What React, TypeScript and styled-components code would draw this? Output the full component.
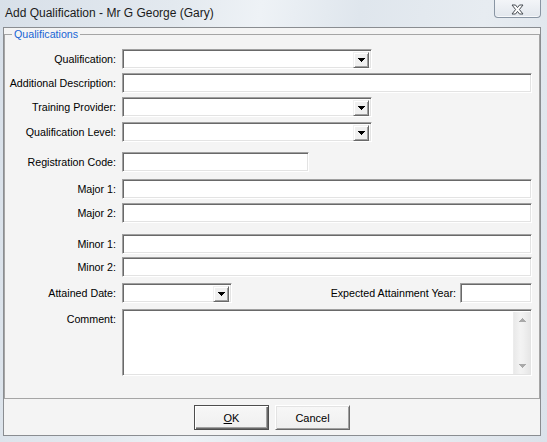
import React from 'react';
import styled, { createGlobalStyle } from 'styled-components';

const Global = createGlobalStyle`
  html, body { margin: 0; padding: 0; }
  body {
    background: #dde4eb;
    font-family: "Liberation Sans", Arial, sans-serif;
  }
`;

const Window = styled.div`
  width: 547px;
  height: 442px;
  display: flex;
  flex-direction: column;
  overflow: hidden;
  background: linear-gradient(100deg, #d8e0e9 0%, #e3e9ef 28%, #eef2f6 42%, #dfe6ed 58%, #e7ecf1 78%, #dbe2ea 100%);
`;

const TitleBar = styled.div`
  height: 27px;
  flex: none;
  display: flex;
  align-items: flex-start;
`;

const Title = styled.div`
  padding: 6px 0 0 5px;
  font-size: 12px;
  line-height: 14px;
  color: #1b1b1b;
  white-space: nowrap;
`;

const CloseButton = styled.div`
  box-sizing: border-box;
  margin-left: auto;
  margin-right: 6px;
  width: 47px;
  height: 18px;
  border: 1px solid #8995a3;
  border-top: none;
  border-radius: 0 0 4px 4px;
  background: linear-gradient(#f3f5f8, #e2e7ed);
  box-shadow: inset 0 -1px 0 #f7f9fb;
  display: flex;
  align-items: center;
  justify-content: center;
  padding-top: 1px;
`;

const Client = styled.div`
  flex: 1;
  margin: 0 6px 6px 3px;
  border: 1px solid #8a8d91;
  background: #f4f4f4;
  display: flex;
  flex-direction: column;
  min-height: 0;
`;

const GroupBox = styled.fieldset`
  box-sizing: border-box;
  flex: none;
  height: 371px;
  margin: 0;
  padding: 0;
  min-width: 0;
  border: 1px solid #a5a5a5;
`;

const Legend = styled.legend`
  margin-left: 7px;
  padding: 0 2px;
  font-size: 10.7px;
  line-height: 13px;
  color: #1765d4;
`;

const Row = styled.div<{ $mt: number; $top?: boolean }>`
  display: grid;
  grid-template-columns: 111px 410px;
  column-gap: 6px;
  align-items: ${p => (p.$top ? 'start' : 'center')};
  margin-top: ${p => p.$mt}px;
`;

const Label = styled.div<{ $pt?: number }>`
  text-align: right;
  font-size: 10.7px;
  line-height: 13px;
  color: #000;
  white-space: nowrap;
  padding-top: ${p => p.$pt ?? 0}px;
`;

const sunken = `
  box-sizing: border-box;
  background: #fff;
  border: 1px solid;
  border-color: #a0a0a0 #ffffff #ffffff #a0a0a0;
  box-shadow: inset 1px 1px 0 #696969, inset -1px -1px 0 #e3e3e3;
`;

const TextBox = styled.input<{ $w: number }>`
  ${sunken}
  width: ${p => p.$w}px;
  height: 20px;
  margin: 0;
  padding: 0 3px;
  font-family: "Liberation Sans", Arial, sans-serif;
  font-size: 11px;
  outline: none;
`;

const ComboBox = styled.div<{ $w: number }>`
  ${sunken}
  width: ${p => p.$w}px;
  height: 20px;
  padding: 2px;
  display: flex;
  justify-content: flex-end;
`;

const DropButton = styled.div`
  box-sizing: border-box;
  width: 16px;
  height: 16px;
  background: #f0f0f0;
  border: 1px solid;
  border-color: #f0f0f0 #696969 #696969 #f0f0f0;
  box-shadow: inset 1px 1px 0 #ffffff, inset -1px -1px 0 #a0a0a0;
  display: flex;
  align-items: center;
  justify-content: center;
`;

const SplitField = styled.div`
  display: flex;
  align-items: center;
`;

const InlineLabel = styled(Label)`
  margin-left: auto;
  margin-right: 4px;
`;

const MemoBox = styled.div`
  ${sunken}
  width: 410px;
  height: 67px;
  padding: 2px 1px 1px 2px;
  display: flex;
`;

const Memo = styled.textarea`
  flex: 1;
  border: none;
  resize: none;
  outline: none;
  margin: 0;
  padding: 2px;
  background: transparent;
  font-family: "Liberation Sans", Arial, sans-serif;
  font-size: 11px;
`;

const ScrollBar = styled.div`
  box-sizing: border-box;
  width: 17px;
  flex: none;
  background: linear-gradient(to right, #e9e9e9, #f3f3f3 40%, #f0f0f0 60%, #e6e6e6);
  border-left: 1px solid #ececec;
  display: flex;
  flex-direction: column;
  justify-content: space-between;
  align-items: center;
  padding: 6px 0 6px;
`;

const Footer = styled.div`
  flex: 1;
  display: flex;
  justify-content: center;
  align-items: flex-start;
  gap: 6px;
  padding-top: 6px;
`;

const Button = styled.button<{ $primary?: boolean }>`
  box-sizing: border-box;
  width: 75px;
  height: 25px;
  margin: 0;
  padding: 0;
  font-family: "Liberation Sans", Arial, sans-serif;
  font-size: 11px;
  color: #000;
  background: linear-gradient(#f7f7f7, #efefef);
  border: 1px solid;
  border-color: ${p => (p.$primary ? '#4d4d4d' : '#ffffff #696969 #696969 #ffffff')};
  box-shadow: ${p =>
    p.$primary
      ? 'inset 1px 1px 0 #ffffff, inset -1px -1px 0 #696969, inset -2px -2px 0 #a0a0a0'
      : 'inset 1px 1px 0 #e3e3e3, inset -1px -1px 0 #a0a0a0'};
  display: flex;
  align-items: center;
  justify-content: center;
`;

const Arrow = ({ down = true, color = '#000' }: { down?: boolean; color?: string }) => (
  <svg width="7" height="4" viewBox="0 0 7 4" shapeRendering="crispEdges" style={{ display: 'block' }}>
    <path
      d={
        down
          ? 'M0 0h7v1H0zM1 1h5v1H1zM2 2h3v1H2zM3 3h1v1H3z'
          : 'M3 0h1v1H3zM2 1h3v1H2zM1 2h5v1H1zM0 3h7v1H0z'
      }
      fill={color}
    />
  </svg>
);

const CloseGlyph = () => (
  <svg width="13" height="11" viewBox="0 0 13 11" style={{ display: 'block' }}>
    <polygon
      points="1,1 4.5,1 6.5,3.6 8.5,1 12,1 8.4,5.5 12,10 8.5,10 6.5,7.4 4.5,10 1,10 4.6,5.5"
      fill="#ffffff"
      stroke="#474c52"
      strokeWidth="1"
      strokeLinejoin="round"
    />
  </svg>
);

const Combo = ({ w }: { w: number }) => (
  <ComboBox $w={w}>
    <DropButton>
      <Arrow />
    </DropButton>
  </ComboBox>
);

export default function App() {
  return (
    <>
      <Global />
      <Window>
        <TitleBar>
          <Title>Add Qualification - Mr G George (Gary)</Title>
          <CloseButton aria-label="Close">
            <CloseGlyph />
          </CloseButton>
        </TitleBar>
        <Client>
          <GroupBox>
            <Legend>Qualifications</Legend>
            <Row $mt={8}>
              <Label>Qualification:</Label>
              <Combo w={250} />
            </Row>
            <Row $mt={4}>
              <Label>Additional Description:</Label>
              <TextBox $w={410} />
            </Row>
            <Row $mt={4}>
              <Label>Training Provider:</Label>
              <Combo w={250} />
            </Row>
            <Row $mt={5}>
              <Label>Qualification Level:</Label>
              <Combo w={250} />
            </Row>
            <Row $mt={10}>
              <Label>Registration Code:</Label>
              <TextBox $w={187} />
            </Row>
            <Row $mt={7}>
              <Label>Major 1:</Label>
              <TextBox $w={410} />
            </Row>
            <Row $mt={4}>
              <Label>Major 2:</Label>
              <TextBox $w={410} />
            </Row>
            <Row $mt={11}>
              <Label>Minor 1:</Label>
              <TextBox $w={410} />
            </Row>
            <Row $mt={3}>
              <Label>Minor 2:</Label>
              <TextBox $w={410} />
            </Row>
            <Row $mt={6}>
              <Label>Attained Date:</Label>
              <SplitField>
                <Combo w={110} />
                <InlineLabel>Expected Attainment Year:</InlineLabel>
                <TextBox $w={72} />
              </SplitField>
            </Row>
            <Row $mt={6} $top>
              <Label $pt={4}>Comment:</Label>
              <MemoBox>
                <Memo />
                <ScrollBar>
                  <Arrow down={false} color="#a9a9a9" />
                  <Arrow color="#a9a9a9" />
                </ScrollBar>
              </MemoBox>
            </Row>
          </GroupBox>
          <Footer>
            <Button $primary>
              <u>O</u>K
            </Button>
            <Button>Cancel</Button>
          </Footer>
        </Client>
      </Window>
    </>
  );
}
